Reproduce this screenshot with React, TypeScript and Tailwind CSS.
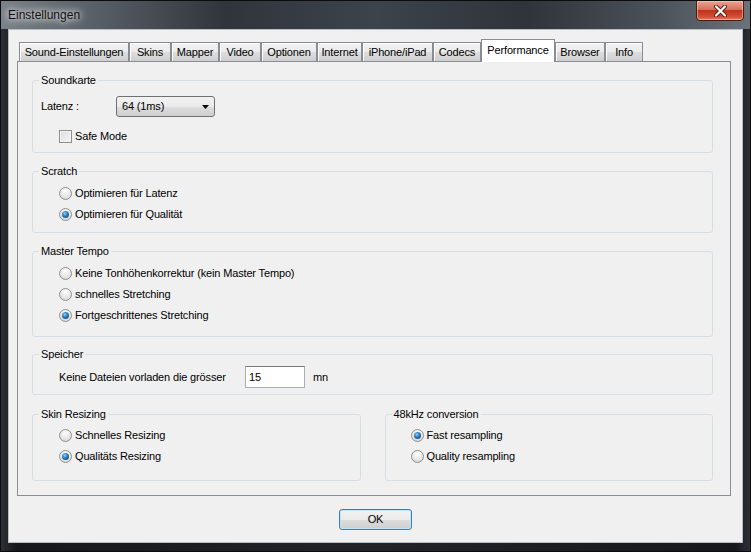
import type { ReactNode } from 'react';

const FONT = '[font-family:"Liberation_Sans",Arial,sans-serif]';

function Radio({ checked, label }: { checked?: boolean; label: string }) {
  return (
    <div className="flex h-[21px] items-center">
      <span className="flex h-[13px] w-[13px] items-center justify-center rounded-full border border-[#8f9092] bg-[radial-gradient(circle_at_50%_30%,#ffffff_0%,#e4e4e4_60%,#cfcfcf_100%)]">
        {checked && (
          <span className="h-[7px] w-[7px] rounded-full bg-[radial-gradient(circle_at_40%_35%,#8fd0f5_0%,#2a78b8_45%,#0d3a66_100%)]" />
        )}
      </span>
      <span className="ml-[3px]">{label}</span>
    </div>
  );
}

function GroupBox({
  title,
  className,
  children,
}: {
  title: string;
  className: string;
  children: ReactNode;
}) {
  return (
    <div className={`relative rounded-[3px] border border-[#d5dfe5] ${className}`}>
      <span className="absolute -top-[8px] left-[6px] bg-[#f0f0f0] px-[2px] leading-[15px]">
        {title}
      </span>
      {children}
    </div>
  );
}

const tabs = [
  { name: 'Sound-Einstellungen', w: 'w-[110px]' },
  { name: 'Skins', w: 'w-[42px]' },
  { name: 'Mapper', w: 'w-[48px]' },
  { name: 'Video', w: 'w-[42px]' },
  { name: 'Optionen', w: 'w-[56px]' },
  { name: 'Internet', w: 'w-[45px]' },
  { name: 'iPhone/iPad', w: 'w-[71px]' },
  { name: 'Codecs', w: 'w-[48px]' },
  { name: 'Performance', w: 'w-[74px]', active: true },
  { name: 'Browser', w: 'w-[50px]' },
  { name: 'Info', w: 'w-[38px]' },
];

export default function App() {
  return (
    <div
      className={`flex h-[552px] w-[751px] flex-col overflow-hidden border border-[#0c0c0c] bg-[linear-gradient(to_right,#2c3036_0%,#16181b_2%,#202328_50%,#16181b_98%,#2c3036_100%)] text-[11px] tracking-[-0.15px] text-black ${FONT}`}
    >
      {/* Title bar */}
      <div className="relative h-[28px] shrink-0 bg-[linear-gradient(to_right,#7a8188_0%,#5a6067_12%,#30353b_30%,#3d434b_50%,#2f343a_70%,#4c5259_88%,#6c7279_100%)]">
        <span className="absolute left-[7px] top-[6px] text-[12px] leading-[16px] tracking-normal text-[#111] [text-shadow:0_0_6px_#fff,0_0_10px_rgba(255,255,255,0.9)]">
          Einstellungen
        </span>
        <div className="absolute right-[6px] -top-px flex h-[21px] w-[48px] items-center justify-center rounded-b-[4px] border border-[#4a1b12] bg-[linear-gradient(to_bottom,#e9a493_0%,#d7705c_45%,#c1331c_50%,#cf4b32_80%,#e27a5e_100%)] shadow-[inset_0_0_0_1px_rgba(255,220,200,0.5)]">
          <svg width="13" height="12" viewBox="0 0 13 12">
            <path d="M2 1.5 L11 10.5 M11 1.5 L2 10.5" stroke="#5a1a10" strokeWidth="4" strokeLinecap="round" />
            <path d="M2 1.5 L11 10.5 M11 1.5 L2 10.5" stroke="#fff" strokeWidth="2.2" strokeLinecap="round" />
          </svg>
        </div>
      </div>

      {/* Client area */}
      <div className="mx-[7px] mb-[8px] flex-1 border border-[#b9bec4] bg-[#f0f0f0]">
        {/* Tab strip */}
        <div className="ml-[10px] flex h-[31px] items-end pt-[10px]">
          {tabs.map((t) =>
            t.active ? (
              <div
                key={t.name}
                className={`relative z-10 -mb-px flex h-[23px] ${t.w} items-start justify-center border border-b-0 border-[#898c95] bg-white pt-[2px]`}
              >
                {t.name}
              </div>
            ) : (
              <div
                key={t.name}
                className={`flex h-[19px] ${t.w} items-center justify-center border border-b-0 border-[#898c95] bg-[linear-gradient(to_bottom,#f2f2f2_0%,#ebebeb_50%,#dddddd_51%,#cfcfcf_100%)] shadow-[inset_1px_1px_0_#fff]`}
              >
                {t.name}
              </div>
            ),
          )}
        </div>

        {/* Tab pane */}
        <div className="ml-[8px] flex h-[435px] w-[714px] flex-col border border-[#898c95] bg-[#f0f0f0] pl-[14px] pt-[18px]">
          <GroupBox title="Soundkarte" className="h-[73px] w-[681px]">
            <div className="mt-[15px] flex h-[21px] items-center pl-[8px]">
              <span className="w-[75px]">Latenz :</span>
              <div className="flex h-[21px] w-[99px] items-center justify-between rounded-[3px] border border-[#707070] bg-[linear-gradient(to_bottom,#f2f2f2_0%,#ebebeb_50%,#dddddd_51%,#cfcfcf_100%)] pl-[5px] pr-[5px]">
                <span>64 (1ms)</span>
                <svg width="7" height="4" viewBox="0 0 7 4">
                  <path d="M0 0 H7 L3.5 4 Z" fill="#000" />
                </svg>
              </div>
            </div>
            <div className="mt-[13px] flex h-[13px] items-center pl-[26px]">
              <span className="h-[13px] w-[13px] border border-[#8f8f8f] bg-[linear-gradient(135deg,#dcdcdc_0%,#f6f6f6_100%)] shadow-[inset_0_0_0_1px_#f4f4f4]" />
              <span className="ml-[3px]">Safe Mode</span>
            </div>
          </GroupBox>

          <GroupBox title="Scratch" className="mt-[18px] h-[62px] w-[681px]">
            <div className="flex flex-col pl-[26px] pt-[11px]">
              <Radio label="Optimieren für Latenz" />
              <Radio checked label="Optimieren für Qualität" />
            </div>
          </GroupBox>

          <GroupBox title="Master Tempo" className="mt-[18px] h-[86px] w-[681px]">
            <div className="flex flex-col pl-[26px] pt-[11px]">
              <Radio label="Keine Tonhöhenkorrektur (kein Master Tempo)" />
              <Radio label="schnelles Stretching" />
              <Radio checked label="Fortgeschrittenes Stretching" />
            </div>
          </GroupBox>

          <GroupBox title="Speicher" className="mt-[17px] h-[41px] w-[681px]">
            <div className="mt-[11px] flex h-[22px] items-center pl-[26px]">
              <span className="w-[186px]">Keine Dateien vorladen die grösser</span>
              <div className="flex h-[22px] w-[60px] items-center border border-[#abadb3] border-t-[#7a7a7a] bg-white pl-[3px]">
                15
              </div>
              <span className="ml-[8px]">mn</span>
            </div>
          </GroupBox>

          <div className="mt-[19px] flex w-[681px] gap-[24px]">
            <GroupBox title="Skin Resizing" className="h-[67px] flex-1">
              <div className="flex flex-col pl-[26px] pt-[10px]">
                <Radio label="Schnelles Resizing" />
                <Radio checked label="Qualitäts Resizing" />
              </div>
            </GroupBox>
            <GroupBox title="48kHz conversion" className="h-[67px] flex-1">
              <div className="flex flex-col pl-[25px] pt-[10px]">
                <Radio checked label="Fast resampling" />
                <Radio label="Quality resampling" />
              </div>
            </GroupBox>
          </div>
        </div>

        {/* Buttons */}
        <div className="mt-[13px] flex justify-center">
          <button className="flex h-[21px] w-[73px] items-center justify-center rounded-[3px] border border-[#3c7fb1] bg-[linear-gradient(to_bottom,#f2f2f2_0%,#ebebeb_50%,#dddddd_51%,#cfcfcf_100%)] shadow-[inset_0_0_0_1px_#bfe3f8]">
            OK
          </button>
        </div>
      </div>
    </div>
  );
}
